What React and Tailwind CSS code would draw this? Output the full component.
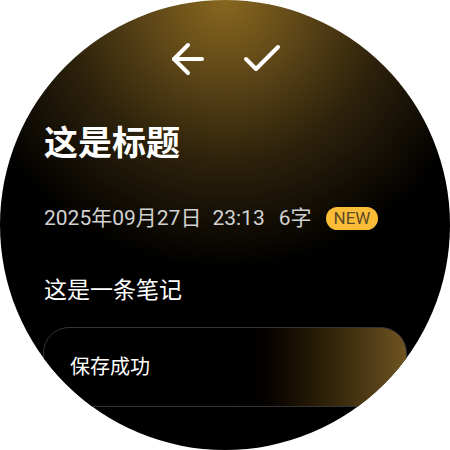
import React from 'react';
import { ArrowLeft, Check } from 'lucide-react';

const App = () => {
  return (
    <div className="w-[450px] h-[450px] bg-white select-none">
      <div
        className="w-[450px] h-[450px] rounded-full overflow-hidden flex flex-col text-white"
        style={{
          background:
            'radial-gradient(circle 270px at 50% 0%, #88681f 0%, #5c4517 30%, #2c210b 60%, #000 100%)',
          fontFamily: 'Roboto, "Noto Sans CJK SC", sans-serif',
        }}
      >
        {/* Top actions */}
        <div className="flex justify-center gap-[26px] mt-[35px]">
          <ArrowLeft className="w-12 h-12" strokeWidth={2} />
          <Check className="w-12 h-12" strokeWidth={2} />
        </div>

        {/* Title */}
        <h1 className="mt-[40px] px-[44px] text-[34px] font-bold leading-[40px] tracking-normal">
          这是标题
        </h1>

        {/* Meta line */}
        <div className="mt-[42px] px-[44px] flex items-center text-[21px] leading-[26px] text-[#d2d2d2]">
          <span>2025年09月27日</span>
          <span className="ml-[11px]">23:13</span>
          <span className="ml-[14px]">6字</span>
          <span className="ml-[14px] h-[23px] px-[8px] rounded-full bg-[#fbbd38] text-[#5b4a26] text-[17px] leading-[23px]">
            NEW
          </span>
        </div>

        {/* Body */}
        <p className="mt-[45px] px-[44px] text-[23px] leading-[30px]">这是一条笔记</p>

        {/* Toast */}
        <div className="mt-[21px] mx-[43px] h-[80px] rounded-[26px] border border-[#343434] bg-gradient-to-r from-black from-50% to-[#6f5421] flex items-center pl-[26px]">
          <span className="text-[20px] leading-[28px]">保存成功</span>
        </div>
      </div>
    </div>
  );
};

export default App;
